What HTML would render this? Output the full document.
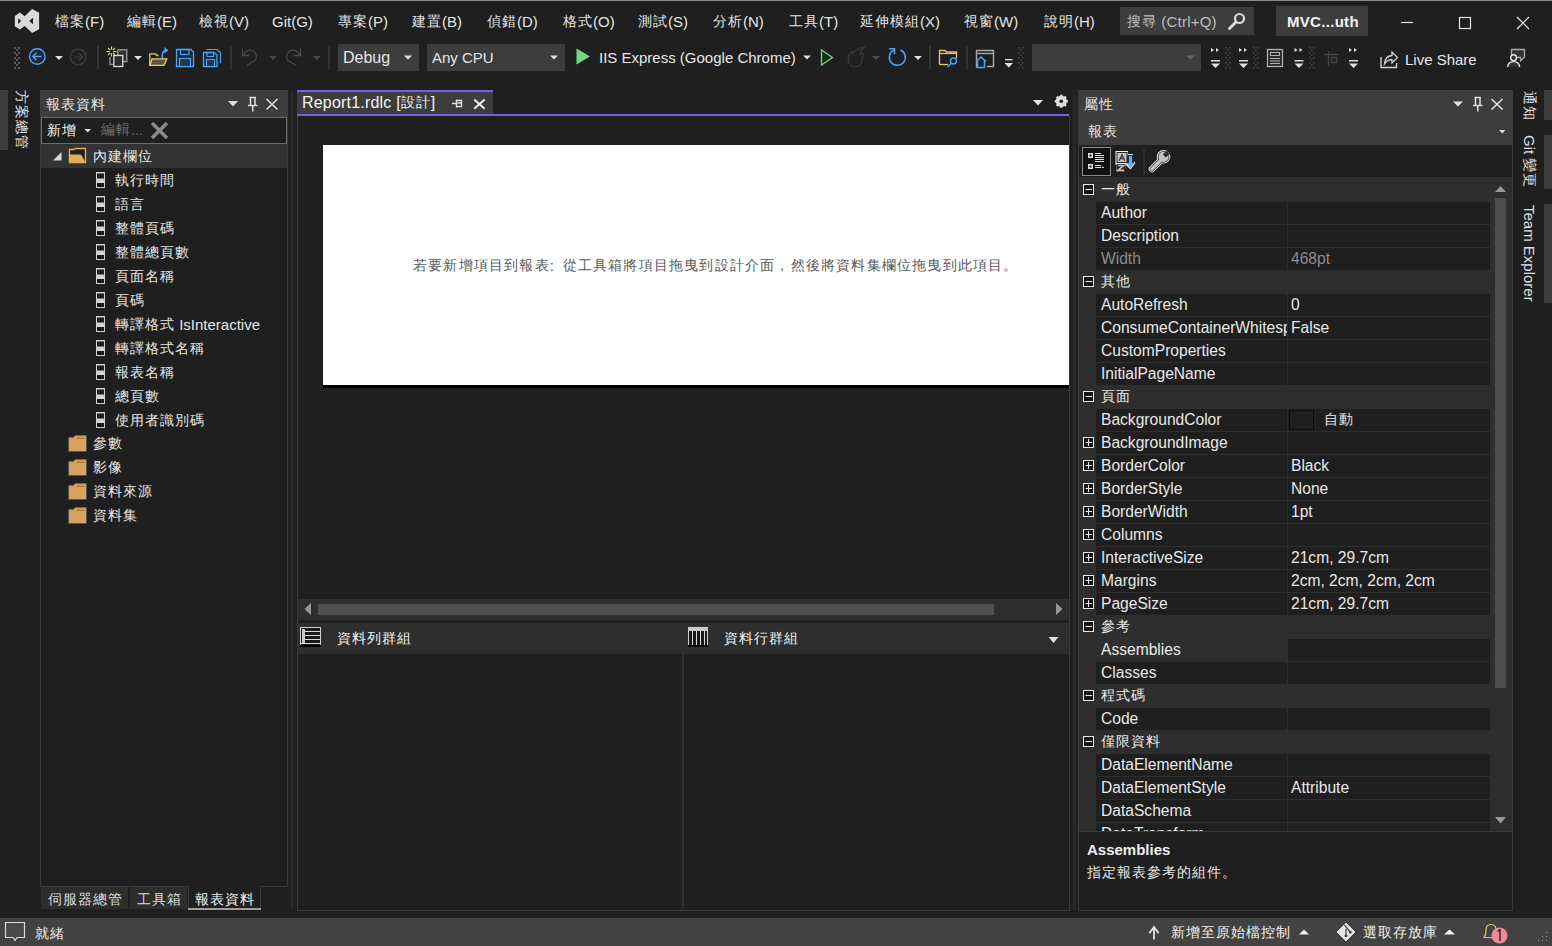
<!DOCTYPE html>
<html><head><meta charset="utf-8">
<style>
*{box-sizing:border-box;margin:0;padding:0}
html,body{width:1552px;height:946px;overflow:hidden;background:#1f1f1f;font-family:"Liberation Sans",sans-serif;font-size:15px;color:#e6e6e6}
.a{position:absolute}
.t{position:absolute;white-space:nowrap;line-height:1}
#topline{left:0;top:0;width:1552px;height:1px;background:#8a8a8a}
.menu{top:14px;font-size:15px;color:#e4e4e4}
.box{background:#3d3d3d}
.sep{position:absolute;width:1px;background:#4a4a4a}
.hdr{background:#3d3d3d}
.tree{color:#e6e6e6}
.pn{font-size:15.6px;margin-top:0px}
.pc{font-size:15px;color:#e8e8e8}
.c{font-size:14px;letter-spacing:1px;position:relative;top:-1.5px}
.rpt .c{letter-spacing:1.2px}
.vt{position:absolute;white-space:nowrap;font-size:15px;color:#e0e0e0;line-height:1;transform-origin:0 0;transform:rotate(90deg)}
</style></head><body>
<div class="a" id="topline"></div>

<!-- logo -->
<svg class="a" style="left:0;top:0" width="50" height="40" viewBox="0 0 50 40">
<path d="M14.8 16 L19.9 12.5 L24.7 16.3 L32.1 8.9 L39.1 12.7 V29.2 L32.1 33 L24.7 26 L19.9 29.6 L14.8 26.2 Z" fill="#d9d9d9"/>
<path d="M18.2 18.2 L21.1 21 L18.2 23.9 Z" fill="#1f1f1f"/>
<path d="M33 17.8 L29.2 21 L33 24.3 Z" fill="#1f1f1f"/>
</svg>

<div class="t menu" style="left:55px"><span class="c">檔案</span>(F)</div>
<div class="t menu" style="left:127px"><span class="c">編輯</span>(E)</div>
<div class="t menu" style="left:199px"><span class="c">檢視</span>(V)</div>
<div class="t menu" style="left:272px">Git(G)</div>
<div class="t menu" style="left:338px"><span class="c">專案</span>(P)</div>
<div class="t menu" style="left:412px"><span class="c">建置</span>(B)</div>
<div class="t menu" style="left:487px"><span class="c">偵錯</span>(D)</div>
<div class="t menu" style="left:563px"><span class="c">格式</span>(O)</div>
<div class="t menu" style="left:638px"><span class="c">測試</span>(S)</div>
<div class="t menu" style="left:713px"><span class="c">分析</span>(N)</div>
<div class="t menu" style="left:789px"><span class="c">工具</span>(T)</div>
<div class="t menu" style="left:860px"><span class="c">延伸模組</span>(X)</div>
<div class="t menu" style="left:964px"><span class="c">視窗</span>(W)</div>
<div class="t menu" style="left:1044px"><span class="c">說明</span>(H)</div>

<div class="a box" style="left:1120px;top:7px;width:134px;height:28px"></div>
<div class="t" style="left:1127px;top:14px;color:#bdbdbd;letter-spacing:0.2px"><span class="c">搜尋</span> (Ctrl+Q)</div>
<div class="a box" style="left:1276px;top:6px;width:92px;height:30px"></div>
<div class="t" style="left:1287px;top:14px;color:#f4f4f4;font-weight:bold;letter-spacing:0.3px">MVC...uth</div>

<!-- toolbar -->
<div class="a box" style="left:338px;top:44px;width:81px;height:27px"></div>
<div class="a box" style="left:427px;top:44px;width:138px;height:27px"></div>
<svg class="a" style="left:0;top:40px" width="1552" height="36" viewBox="0 40 1552 36">
<g fill="#5a5a5a">
<rect x="14" y="47" width="2" height="2"/><rect x="18" y="47" width="2" height="2"/><rect x="16" y="49" width="2" height="2"/>
<rect x="14" y="52" width="2" height="2"/><rect x="18" y="52" width="2" height="2"/><rect x="16" y="54" width="2" height="2"/>
<rect x="14" y="57" width="2" height="2"/><rect x="18" y="57" width="2" height="2"/><rect x="16" y="59" width="2" height="2"/>
<rect x="14" y="62" width="2" height="2"/><rect x="18" y="62" width="2" height="2"/><rect x="16" y="64" width="2" height="2"/>
<rect x="14" y="67" width="2" height="2"/><rect x="18" y="67" width="2" height="2"/>
</g>
<!-- back -->
<circle cx="37.3" cy="56.5" r="7.8" fill="#1d2733" stroke="#4aa3f5" stroke-width="1.4"/>
<path d="M41.5 56.5 H33 M36.5 52.8 L32.8 56.5 L36.5 60.2" fill="none" stroke="#4aa3f5" stroke-width="1.4"/>
<path d="M55 56 H63 L59 60 Z" fill="#e0e0e0"/>
<!-- forward disabled -->
<circle cx="78.2" cy="57" r="7.8" fill="none" stroke="#424242" stroke-width="1.2"/>
<path d="M74 57 H82.5 M79 53.3 L82.7 57 L79 60.7" fill="none" stroke="#424242" stroke-width="1.2"/>
<rect x="97.5" y="45" width="1" height="24" fill="#4a4a4a"/>
<!-- new project -->
<path d="M110 57 V64.3 H113" fill="none" stroke="#9a9a9a" stroke-width="1.3"/>
<rect x="117.8" y="49.8" width="9" height="11.8" fill="#333" stroke="#9a9a9a" stroke-width="1.3"/>
<rect x="113.8" y="55.5" width="9" height="11" fill="#2d2d2d" stroke="#dcdcdc" stroke-width="1.3"/>
<g stroke="#f0d58a" stroke-width="1.1"><path d="M111.5 46.5 V49.7 M111.5 53.3 V56.5 M106.5 51.5 H109.7 M113.3 51.5 H116.5 M108 48 L110.2 50.2 M112.8 52.8 L115 55 M115 48 L112.8 50.2 M110.2 52.8 L108 55"/></g>
<path d="M134 56 H142 L138 60 Z" fill="#e0e0e0"/>
<!-- open folder -->
<path d="M149.8 65 V53.8 H155.5 L157 55.5 H158.5" fill="none" stroke="#e8c77a" stroke-width="1.3"/>
<path d="M150 65.3 L152 58.8 H166.8 L164 65.3 Z" fill="#5f5440" stroke="#e8c77a" stroke-width="1.3"/>
<path d="M162.3 58 V55.5 Q162.3 51 166 50.5" fill="none" stroke="#4aa3f5" stroke-width="1.6"/>
<path d="M164.5 47.5 L167.8 50.3 L164.5 53" fill="#4aa3f5" stroke="#4aa3f5" stroke-width="1"/>
<!-- save -->
<path d="M176.5 49.5 H191 L193.5 52 V66.5 H176.5 Z" fill="#1d2733" stroke="#4aa3f5" stroke-width="1.3"/>
<rect x="180.5" y="49.5" width="8.5" height="5" fill="none" stroke="#4aa3f5" stroke-width="1.2"/>
<rect x="179.5" y="58.5" width="11" height="8" fill="#263545" stroke="#4aa3f5" stroke-width="1.2"/>
<!-- save all -->
<path d="M206.5 49.5 H217 L220.5 52.5 V63" fill="none" stroke="#4aa3f5" stroke-width="1.2"/>
<path d="M203.5 52.5 H214 L217 55 V66.5 H203.5 Z" fill="#1d2733" stroke="#4aa3f5" stroke-width="1.3"/>
<rect x="207" y="52.5" width="6.5" height="4" fill="none" stroke="#4aa3f5" stroke-width="1.1"/>
<rect x="206.5" y="59.5" width="8" height="7" fill="#263545" stroke="#4aa3f5" stroke-width="1.1"/>
<rect x="230.5" y="45" width="1" height="24" fill="#4a4a4a"/>
<!-- undo -->
<path d="M242.5 48.5 V55.5 H249.5 M243 55 Q248 47.5 254 51.5 Q258 56 255.5 60 L247 65.5" fill="none" stroke="#4a4a4a" stroke-width="1.3"/>
<path d="M269 56 H277 L273 60 Z" fill="#4a4a4a"/>
<!-- redo -->
<path d="M300.5 48.5 V55.5 H293.5 M300 55 Q295 47.5 289 51.5 Q285 56 287.5 60 L296 65.5" fill="none" stroke="#4a4a4a" stroke-width="1.3"/>
<path d="M313 56 H321 L317 60 Z" fill="#4a4a4a"/>
<rect x="328.5" y="45" width="1" height="24" fill="#4a4a4a"/>
<!-- combo arrows -->
<path d="M404 55.5 H412 L408 59.5 Z" fill="#e0e0e0"/>
<path d="M550 55.5 H558 L554 59.5 Z" fill="#e0e0e0"/>
<path d="M576.5 48.5 L590 56.5 L576.5 64.5 Z" fill="#74d779"/>
<path d="M803 55.5 H811 L807 59.5 Z" fill="#e0e0e0"/>
<path d="M821.5 50 L832.5 57.5 L821.5 65 Z" fill="#1f2a20" stroke="#74d779" stroke-width="1.3"/>
<!-- flame -->
<path d="M851.5 51.5 L853 53.5 Q856 48.5 864 47.2 Q860 50.5 860.5 54.5 L863.8 53 Q862 57 862 61 Q861 66.5 855.5 66.8 Q848.5 66.5 848.2 59.5 Q848.2 54.5 851.5 51.5 Z" fill="none" stroke="#3a3a3a" stroke-width="1.3"/>
<path d="M872 56 H880 L876 60 Z" fill="#4a4a4a"/>
<!-- refresh -->
<path d="M900.5 50 A8 8 0 1 1 893.8 50.2" fill="none" stroke="#4aa3f5" stroke-width="1.5"/>
<path d="M889.2 48.8 H894.5 V54" fill="none" stroke="#4aa3f5" stroke-width="1.6"/>
<path d="M914 56 H922 L918 60 Z" fill="#e0e0e0"/>
<rect x="929.5" y="45" width="1" height="24" fill="#4a4a4a"/>
<!-- folder search -->
<path d="M939.5 64.5 V50.5 H945 L946.5 52 H956.5 V58" fill="none" stroke="#e8c77a" stroke-width="1.3"/>
<path d="M939.5 64.5 H948" fill="none" stroke="#e8c77a" stroke-width="1.3"/>
<path d="M939.5 53.5 H956.5" fill="none" stroke="#e8c77a" stroke-width="1.2"/>
<circle cx="953.5" cy="61" r="3" fill="#1f1f1f" stroke="#4aa3f5" stroke-width="1.4"/>
<path d="M951.3 63.2 L947.5 67" stroke="#4aa3f5" stroke-width="1.5"/>
<rect x="966.5" y="45" width="1" height="24" fill="#4a4a4a"/>
<!-- window home -->
<path d="M978 67 H976.5 V50.5 H993.5 V66.5 H987" fill="none" stroke="#a8a8a8" stroke-width="1.4"/>
<path d="M976.5 53.5 H993.5" stroke="#a8a8a8" stroke-width="1.4"/>
<path d="M976 61.5 L981 57 L986 61.5 M977.5 60.5 V67.5 H984.5 V60.5" fill="none" stroke="#4aa3f5" stroke-width="1.6"/>
<rect x="1005" y="59" width="7.5" height="1.3" fill="#e0e0e0"/>
<path d="M1004.5 63 H1013 L1008.75 67.5 Z" fill="#e0e0e0"/>
<g fill="#4a4a4a">
<rect x="1018" y="47" width="1.5" height="1.5"/><rect x="1022" y="47" width="1.5" height="1.5"/><rect x="1020" y="49.5" width="1.5" height="1.5"/>
<rect x="1018" y="52" width="1.5" height="1.5"/><rect x="1022" y="52" width="1.5" height="1.5"/><rect x="1020" y="54.5" width="1.5" height="1.5"/>
<rect x="1018" y="57" width="1.5" height="1.5"/><rect x="1022" y="57" width="1.5" height="1.5"/><rect x="1020" y="59.5" width="1.5" height="1.5"/>
<rect x="1018" y="62" width="1.5" height="1.5"/><rect x="1022" y="62" width="1.5" height="1.5"/><rect x="1020" y="64.5" width="1.5" height="1.5"/>
<rect x="1018" y="67" width="1.5" height="1.5"/><rect x="1022" y="67" width="1.5" height="1.5"/>
</g>
<rect x="1032" y="44" width="169" height="27" fill="#3d3d3d"/>
<path d="M1186 55.5 H1195 L1190.5 59.5 Z" fill="#686868"/>
</svg>
<div class="t" style="left:343px;top:50px;font-size:16px">Debug</div>
<div class="t" style="left:432px;top:50px">Any CPU</div>
<div class="t" style="left:599px;top:50px">IIS Express (Google Chrome)</div>
<div class="t" style="left:1405px;top:52px">Live Share</div>
<!-- right toolbar icons -->
<svg class="a" style="left:1200px;top:40px" width="352" height="36" viewBox="1200 40 352 36">
<defs>
<g id="ovf">
<path d="M0 0 L3 2 L0 4 Z M5 0 L8 2 L5 4 Z" fill="#e0e0e0"/>
<rect x="0" y="12" width="9" height="1.5" fill="#e0e0e0"/>
<path d="M0 15.5 H9 L4.5 20 Z" fill="#e0e0e0"/>
</g>
<g id="grip" fill="#4a4a4a">
<rect x="0" y="0" width="1.5" height="1.5"/><rect x="4" y="0" width="1.5" height="1.5"/><rect x="2" y="2.5" width="1.5" height="1.5"/>
<rect x="0" y="5" width="1.5" height="1.5"/><rect x="4" y="5" width="1.5" height="1.5"/><rect x="2" y="7.5" width="1.5" height="1.5"/>
<rect x="0" y="10" width="1.5" height="1.5"/><rect x="4" y="10" width="1.5" height="1.5"/><rect x="2" y="12.5" width="1.5" height="1.5"/>
<rect x="0" y="15" width="1.5" height="1.5"/><rect x="4" y="15" width="1.5" height="1.5"/><rect x="2" y="17.5" width="1.5" height="1.5"/>
<rect x="0" y="20" width="1.5" height="1.5"/><rect x="4" y="20" width="1.5" height="1.5"/>
</g>
</defs>
<use href="#ovf" x="1211" y="48"/><use href="#grip" x="1225" y="47"/>
<use href="#ovf" x="1239" y="48"/><use href="#grip" x="1253" y="47"/>
<rect x="1267.5" y="49.5" width="15" height="17" fill="#2a2a2a" stroke="#b0b0b0" stroke-width="1.3"/>
<rect x="1270.5" y="52.5" width="9" height="3" fill="none" stroke="#b0b0b0" stroke-width="1"/>
<path d="M1270 58.5 H1280 M1270 61 H1280 M1270 63.5 H1280" stroke="#b0b0b0" stroke-width="1"/>
<use href="#ovf" x="1294.5" y="48"/><use href="#grip" x="1309" y="47"/>
<path d="M1324 54.5 H1339 M1328.5 51 V66 M1331.5 57.5 H1336.5 V62.5 H1331.5 Z" fill="none" stroke="#444" stroke-width="1.3"/>
<use href="#ovf" x="1349" y="48"/>
<path d="M1381 57 V67.5 H1396.5 V63" fill="none" stroke="#d0d0d0" stroke-width="1.4"/>
<path d="M1384.5 64 Q1385 56 1392 55.5 V52 L1397.5 57.5 L1392 63 V59.5 Q1387.5 59.5 1384.5 64 Z" fill="none" stroke="#d0d0d0" stroke-width="1.3"/>
<path d="M1511.5 56 V49.5 H1524.5 V57 L1520.5 61 V57.5 H1516.5" fill="#333" stroke="#a8a8a8" stroke-width="1.3"/>
<circle cx="1513.6" cy="57.7" r="2.9" fill="#333" stroke="#e6e6e6" stroke-width="1.4"/>
<path d="M1507.6 67 Q1508 61.6 1513.6 61.6 Q1519.2 61.6 1519.7 67" fill="#333" stroke="#e6e6e6" stroke-width="1.4"/>
</svg>
<!-- search icon -->
<svg class="a" style="left:1226px;top:10px" width="20" height="22" viewBox="1226 10 20 22">
<circle cx="1239.5" cy="18.5" r="4.5" fill="none" stroke="#d8d8d8" stroke-width="2.2"/>
<path d="M1236 22 L1229.5 28.5" stroke="#d8d8d8" stroke-width="3" stroke-linecap="round"/>
</svg>
<!-- left vertical tab strip -->
<div class="a" style="left:0;top:90px;width:8px;height:60px;background:#3d3d3d"></div>
<div class="vt" style="left:29px;top:90px"><span class="c">方案總管</span></div>

<!-- left panel -->
<div class="a hdr" style="left:40px;top:90px;width:248px;height:54px"></div>
<div class="t" style="left:46px;top:97px;color:#e6e6e6"><span class="c">報表資料</span></div>
<div class="a" style="left:41px;top:117px;width:246px;height:27px;background:#1f1f1f;border:1px solid #6a6a6a"></div>
<div class="t" style="left:47px;top:123px;color:#f0f0f0"><span class="c">新增</span></div>
<div class="t" style="left:101px;top:123px;color:#707070;font-size:14px"><span class="c">編輯</span>...</div>
<div class="a" style="left:40px;top:144px;width:248px;height:743px;background:#1f1f1f;border:1px solid #3a3a3a;border-top:0"></div>
<div class="a" style="left:41px;top:144px;width:246px;height:24px;background:#333333"></div>
<div class="t tree" style="left:93px;top:149px"><span class="c">內建欄位</span></div>
<div class="t tree" style="left:115px;top:173px"><span class="c">執行時間</span></div>
<div class="t tree" style="left:115px;top:197px"><span class="c">語言</span></div>
<div class="t tree" style="left:115px;top:221px"><span class="c">整體頁碼</span></div>
<div class="t tree" style="left:115px;top:245px"><span class="c">整體總頁數</span></div>
<div class="t tree" style="left:115px;top:269px"><span class="c">頁面名稱</span></div>
<div class="t tree" style="left:115px;top:293px"><span class="c">頁碼</span></div>
<div class="t tree" style="left:115px;top:317px"><span class="c">轉譯格式</span> IsInteractive</div>
<div class="t tree" style="left:115px;top:341px"><span class="c">轉譯格式名稱</span></div>
<div class="t tree" style="left:115px;top:365px"><span class="c">報表名稱</span></div>
<div class="t tree" style="left:115px;top:389px"><span class="c">總頁數</span></div>
<div class="t tree" style="left:115px;top:413px"><span class="c">使用者識別碼</span></div>
<div class="t tree" style="left:93px;top:436px"><span class="c">參數</span></div>
<div class="t tree" style="left:93px;top:460px"><span class="c">影像</span></div>
<div class="t tree" style="left:93px;top:484px"><span class="c">資料來源</span></div>
<div class="t tree" style="left:93px;top:508px"><span class="c">資料集</span></div>

<svg class="a" style="left:0;top:90px" width="300" height="460" viewBox="0 90 300 460">
<path d="M228 101 H238 L233 106.5 Z" fill="#e0e0e0"/>
<path d="M249.5 97.5 H256 M250.5 98 V105 M255 98 V105 M248 105.5 H257.5 M252.75 105.5 V111.5" fill="none" stroke="#e0e0e0" stroke-width="1.5"/>
<path d="M266.5 99 L277.5 109.5 M277.5 99 L266.5 109.5" stroke="#e0e0e0" stroke-width="1.6"/>
<path d="M84.5 129 H91 L87.75 132.5 Z" fill="#e0e0e0"/>
<path d="M152 123 L167 138 M167 123 L152 138" stroke="#8a8a8a" stroke-width="3.5"/>
<path d="M53 160.5 L61.5 152 V160.5 Z" fill="#d8d8d8"/>
<path d="M69.5 162.5 V149.5 H74 L75.5 148.5 H85.5 V162.5 Z" fill="#1f1f1f" stroke="#e0ae5e" stroke-width="1.4"/>
<path d="M69 154.5 H81 L85.5 162.5 H69 Z" fill="#e0ae5e"/>
<rect x="96" y="172.0" width="9" height="16" fill="#d0d0d0"/><rect x="97" y="173.5" width="7" height="5" fill="#1a1a1a"/><rect x="97" y="183.0" width="7" height="4" fill="#1a1a1a"/>
<rect x="96" y="196.0" width="9" height="16" fill="#d0d0d0"/><rect x="97" y="197.5" width="7" height="5" fill="#1a1a1a"/><rect x="97" y="207.0" width="7" height="4" fill="#1a1a1a"/>
<rect x="96" y="220.0" width="9" height="16" fill="#d0d0d0"/><rect x="97" y="221.5" width="7" height="5" fill="#1a1a1a"/><rect x="97" y="231.0" width="7" height="4" fill="#1a1a1a"/>
<rect x="96" y="244.0" width="9" height="16" fill="#d0d0d0"/><rect x="97" y="245.5" width="7" height="5" fill="#1a1a1a"/><rect x="97" y="255.0" width="7" height="4" fill="#1a1a1a"/>
<rect x="96" y="268.0" width="9" height="16" fill="#d0d0d0"/><rect x="97" y="269.5" width="7" height="5" fill="#1a1a1a"/><rect x="97" y="279.0" width="7" height="4" fill="#1a1a1a"/>
<rect x="96" y="292.0" width="9" height="16" fill="#d0d0d0"/><rect x="97" y="293.5" width="7" height="5" fill="#1a1a1a"/><rect x="97" y="303.0" width="7" height="4" fill="#1a1a1a"/>
<rect x="96" y="316.0" width="9" height="16" fill="#d0d0d0"/><rect x="97" y="317.5" width="7" height="5" fill="#1a1a1a"/><rect x="97" y="327.0" width="7" height="4" fill="#1a1a1a"/>
<rect x="96" y="340.0" width="9" height="16" fill="#d0d0d0"/><rect x="97" y="341.5" width="7" height="5" fill="#1a1a1a"/><rect x="97" y="351.0" width="7" height="4" fill="#1a1a1a"/>
<rect x="96" y="364.0" width="9" height="16" fill="#d0d0d0"/><rect x="97" y="365.5" width="7" height="5" fill="#1a1a1a"/><rect x="97" y="375.0" width="7" height="4" fill="#1a1a1a"/>
<rect x="96" y="388.0" width="9" height="16" fill="#d0d0d0"/><rect x="97" y="389.5" width="7" height="5" fill="#1a1a1a"/><rect x="97" y="399.0" width="7" height="4" fill="#1a1a1a"/>
<rect x="96" y="412.0" width="9" height="16" fill="#d0d0d0"/><rect x="97" y="413.5" width="7" height="5" fill="#1a1a1a"/><rect x="97" y="423.0" width="7" height="4" fill="#1a1a1a"/>
<path d="M68.5 451.5 V437.5 H73.5 L75 435.5 H86.5 V451.5 Z" fill="#d6a45c" stroke="#505050" stroke-width="1"/><path d="M69 438.0 H73.8 L75.3 436.0 H86" fill="none" stroke="#c08a45" stroke-width="1"/><path d="M77 438.3 H84.5" stroke="#a8743a" stroke-width="1.2"/>
<path d="M68.5 475.5 V461.5 H73.5 L75 459.5 H86.5 V475.5 Z" fill="#d6a45c" stroke="#505050" stroke-width="1"/><path d="M69 462.0 H73.8 L75.3 460.0 H86" fill="none" stroke="#c08a45" stroke-width="1"/><path d="M77 462.3 H84.5" stroke="#a8743a" stroke-width="1.2"/>
<path d="M68.5 499.5 V485.5 H73.5 L75 483.5 H86.5 V499.5 Z" fill="#d6a45c" stroke="#505050" stroke-width="1"/><path d="M69 486.0 H73.8 L75.3 484.0 H86" fill="none" stroke="#c08a45" stroke-width="1"/><path d="M77 486.3 H84.5" stroke="#a8743a" stroke-width="1.2"/>
<path d="M68.5 523.5 V509.5 H73.5 L75 507.5 H86.5 V523.5 Z" fill="#d6a45c" stroke="#505050" stroke-width="1"/><path d="M69 510.0 H73.8 L75.3 508.0 H86" fill="none" stroke="#c08a45" stroke-width="1"/><path d="M77 510.3 H84.5" stroke="#a8743a" stroke-width="1.2"/>

</svg>

<!-- bottom tabs -->
<div class="a" style="left:41px;top:887px;width:87px;height:22px;background:#2d2d2d"></div>
<div class="a" style="left:130px;top:887px;width:57px;height:22px;background:#2d2d2d"></div>
<div class="a" style="left:188px;top:886px;width:73px;height:24px;background:#1f1f1f;border:1px solid #3a3a3a;border-top:0"></div>
<div class="a" style="left:188px;top:908px;width:73px;height:2px;background:#a0a0a0"></div>
<div class="t" style="left:48px;top:892px;color:#dcdcdc"><span class="c">伺服器總管</span></div>
<div class="t" style="left:137px;top:892px;color:#dcdcdc"><span class="c">工具箱</span></div>
<div class="t" style="left:195px;top:892px;color:#f0f0f0"><span class="c">報表資料</span></div>
<!-- document -->
<div class="a" style="left:291px;top:90px;width:2px;height:820px;background:#2a2a2a"></div>
<div class="a" style="left:1073px;top:90px;width:3px;height:820px;background:#272727"></div>
<div class="a" style="left:297px;top:90px;width:196px;height:24px;background:#3d3d3d;border-top:2px solid #7160e8"></div>
<div class="a" style="left:297px;top:114px;width:772px;height:2px;background:#7160e8"></div>
<div class="a" style="left:297px;top:116px;width:773px;height:795px;background:#1f1f1f;border:1px solid #3a3a3a;border-top:0"></div>
<div class="t" style="left:302px;top:95px;color:#f4f4f4;font-size:16px;letter-spacing:0.2px">Report1.rdlc [<span class="c">設計</span>]</div>
<svg class="a" style="left:440px;top:90px" width="640" height="30" viewBox="440 90 640 30">
<path d="M452 103.5 H456 M456.5 99.5 V107.5 M456.5 100.5 H461.5 V106.5 H456.5 M457.5 103 H461" fill="none" stroke="#e0e0e0" stroke-width="1.4"/>
<path d="M474.2 99.5 L484.6 108.7 M484.6 99.5 L474.2 108.7" stroke="#f4f4f4" stroke-width="1.9"/>
<path d="M1033 100 H1043 L1038 105.5 Z" fill="#e0e0e0"/>
<g transform="translate(1061.3 101.3)">
<circle r="4.3" fill="none" stroke="#e0e0e0" stroke-width="2.6"/>
<g stroke="#e0e0e0" stroke-width="2.4"><path d="M0 -6.5 V6.5 M-6.5 0 H6.5 M-4.6 -4.6 L4.6 4.6 M4.6 -4.6 L-4.6 4.6"/></g>
<circle r="1.8" fill="#1f1f1f"/>
</g>
</svg>
<div class="a" style="left:323px;top:145px;width:746px;height:243px;background:#fff;border-bottom:3px solid #000"></div>
<div class="t rpt" style="left:413px;top:258px;color:#5a5a5a;font-size:15px;letter-spacing:0.18px;word-spacing:4px"><span class="c">若要新增項目到報表</span>: <span class="c">從工具箱將項目拖曳到設計介面，然後將資料集欄位拖曳到此項目。</span></div>

<!-- h scrollbar -->
<div class="a" style="left:298px;top:599px;width:771px;height:21px;background:#2e2e2e"></div>
<div class="a" style="left:318px;top:604px;width:676px;height:11px;background:#505050"></div>
<svg class="a" style="left:298px;top:599px" width="772" height="60" viewBox="298 599 772 60">
<path d="M311 603 V615 L304.5 609 Z" fill="#999"/>
<path d="M1056 603 V615 L1062.5 609 Z" fill="#999"/>
</svg>
<!-- group panes -->
<div class="a" style="left:298px;top:623px;width:771px;height:31px;background:#2e2e2e"></div>
<div class="a" style="left:682px;top:654px;width:2px;height:256px;background:#2e2e2e"></div>
<svg class="a" style="left:298px;top:622px" width="772" height="40" viewBox="298 622 772 40">
<rect x="300.5" y="627.5" width="20" height="18" fill="#1a1a1a" stroke="#d0d0d0" stroke-width="1"/>
<g fill="#c8c8c8"><rect x="302" y="629" width="3" height="15"/></g>
<g stroke="#d8d8d8" stroke-width="1"><path d="M305 631.5 H320 M305 635.5 H320 M305 639.5 H320 M301 643.5 H320"/></g>
<rect x="300" y="645" width="21" height="2" fill="#000"/>
<rect x="688.5" y="627.5" width="19" height="18" fill="#1a1a1a" stroke="#d0d0d0" stroke-width="1"/>
<g fill="#c8c8c8"><rect x="689" y="628" width="18" height="3"/></g>
<g stroke="#d8d8d8" stroke-width="1"><path d="M692.5 631 V645 M696.5 631 V645 M700.5 631 V645 M704.5 631 V645"/></g>
<rect x="688" y="645" width="20" height="2" fill="#000"/>
<path d="M1048.5 637 H1058.5 L1053.5 643 Z" fill="#e0e0e0"/>
</svg>
<div class="t" style="left:337px;top:631px;color:#f0f0f0"><span class="c">資料列群組</span></div>
<div class="t" style="left:724px;top:631px;color:#f0f0f0"><span class="c">資料行群組</span></div>

<!-- properties -->
<div class="a" style="left:1078px;top:90px;width:435px;height:821px;border:1px solid #3a3a3a;background:#1f1f1f"></div>
<div class="a hdr" style="left:1079px;top:90px;width:433px;height:55px"></div>
<div class="t" style="left:1084px;top:97px;color:#e6e6e6"><span class="c">屬性</span></div>
<div class="t" style="left:1088px;top:124px;color:#e6e6e6"><span class="c">報表</span></div>
<div class="a" style="left:1079px;top:145px;width:433px;height:32px;background:#1f1f1f"></div>
<div class="a" style="left:1079px;top:177px;width:433px;height:654px;background:#2e2e2e"></div>
<div class="a" style="left:1079px;top:177px;width:433px;height:654px;overflow:hidden">
<div class="a" style="left:0;top:0;width:433px;height:654px">
</div></div>
<div class="a" style="left:0;top:0;width:1552px;height:831px;overflow:hidden;pointer-events:none">
<div class="a" style="left:1096px;top:202px;width:191px;height:22px;background:#1f1f1f"></div><div class="a" style="left:1288px;top:202px;width:202px;height:22px;background:#1f1f1f"></div>
<div class="a" style="left:1096px;top:225px;width:191px;height:22px;background:#1f1f1f"></div><div class="a" style="left:1288px;top:225px;width:202px;height:22px;background:#1f1f1f"></div>
<div class="a" style="left:1096px;top:248px;width:191px;height:22px;background:#1f1f1f"></div><div class="a" style="left:1288px;top:248px;width:202px;height:22px;background:#1f1f1f"></div>
<div class="a" style="left:1096px;top:294px;width:191px;height:22px;background:#1f1f1f"></div><div class="a" style="left:1288px;top:294px;width:202px;height:22px;background:#1f1f1f"></div>
<div class="a" style="left:1096px;top:317px;width:191px;height:22px;background:#1f1f1f"></div><div class="a" style="left:1288px;top:317px;width:202px;height:22px;background:#1f1f1f"></div>
<div class="a" style="left:1096px;top:340px;width:191px;height:22px;background:#1f1f1f"></div><div class="a" style="left:1288px;top:340px;width:202px;height:22px;background:#1f1f1f"></div>
<div class="a" style="left:1096px;top:363px;width:191px;height:22px;background:#1f1f1f"></div><div class="a" style="left:1288px;top:363px;width:202px;height:22px;background:#1f1f1f"></div>
<div class="a" style="left:1096px;top:409px;width:191px;height:22px;background:#1f1f1f"></div><div class="a" style="left:1288px;top:409px;width:202px;height:22px;background:#1f1f1f"></div>
<div class="a" style="left:1096px;top:432px;width:191px;height:22px;background:#1f1f1f"></div><div class="a" style="left:1288px;top:432px;width:202px;height:22px;background:#1f1f1f"></div>
<div class="a" style="left:1096px;top:455px;width:191px;height:22px;background:#1f1f1f"></div><div class="a" style="left:1288px;top:455px;width:202px;height:22px;background:#1f1f1f"></div>
<div class="a" style="left:1096px;top:478px;width:191px;height:22px;background:#1f1f1f"></div><div class="a" style="left:1288px;top:478px;width:202px;height:22px;background:#1f1f1f"></div>
<div class="a" style="left:1096px;top:501px;width:191px;height:22px;background:#1f1f1f"></div><div class="a" style="left:1288px;top:501px;width:202px;height:22px;background:#1f1f1f"></div>
<div class="a" style="left:1096px;top:524px;width:191px;height:22px;background:#1f1f1f"></div><div class="a" style="left:1288px;top:524px;width:202px;height:22px;background:#1f1f1f"></div>
<div class="a" style="left:1096px;top:547px;width:191px;height:22px;background:#1f1f1f"></div><div class="a" style="left:1288px;top:547px;width:202px;height:22px;background:#1f1f1f"></div>
<div class="a" style="left:1096px;top:570px;width:191px;height:22px;background:#1f1f1f"></div><div class="a" style="left:1288px;top:570px;width:202px;height:22px;background:#1f1f1f"></div>
<div class="a" style="left:1096px;top:593px;width:191px;height:22px;background:#1f1f1f"></div><div class="a" style="left:1288px;top:593px;width:202px;height:22px;background:#1f1f1f"></div>
<div class="a" style="left:1096px;top:639px;width:191px;height:22px;background:#2e2e2e"></div><div class="a" style="left:1288px;top:639px;width:202px;height:22px;background:#1f1f1f"></div>
<div class="a" style="left:1096px;top:662px;width:191px;height:22px;background:#1f1f1f"></div><div class="a" style="left:1288px;top:662px;width:202px;height:22px;background:#1f1f1f"></div>
<div class="a" style="left:1096px;top:708px;width:191px;height:22px;background:#1f1f1f"></div><div class="a" style="left:1288px;top:708px;width:202px;height:22px;background:#1f1f1f"></div>
<div class="a" style="left:1096px;top:754px;width:191px;height:22px;background:#1f1f1f"></div><div class="a" style="left:1288px;top:754px;width:202px;height:22px;background:#1f1f1f"></div>
<div class="a" style="left:1096px;top:777px;width:191px;height:22px;background:#1f1f1f"></div><div class="a" style="left:1288px;top:777px;width:202px;height:22px;background:#1f1f1f"></div>
<div class="a" style="left:1096px;top:800px;width:191px;height:22px;background:#1f1f1f"></div><div class="a" style="left:1288px;top:800px;width:202px;height:22px;background:#1f1f1f"></div>
<div class="a" style="left:1096px;top:823px;width:191px;height:22px;background:#1f1f1f"></div><div class="a" style="left:1288px;top:823px;width:202px;height:22px;background:#1f1f1f"></div>

<div class="t pc" style="left:1101px;top:182px"><span class="c">一般</span></div>
<div class="t pn" style="left:1101px;top:205px;color:#e8e8e8">Author</div>
<div class="t pn" style="left:1101px;top:228px;color:#e8e8e8">Description</div>
<div class="t pn" style="left:1101px;top:251px;color:#8c8c8c">Width</div>
<div class="t pn" style="left:1291px;top:251px;color:#8c8c8c">468pt</div>
<div class="t pc" style="left:1101px;top:274px"><span class="c">其他</span></div>
<div class="t pn" style="left:1101px;top:297px;color:#e8e8e8">AutoRefresh</div>
<div class="t pn" style="left:1291px;top:297px;color:#e8e8e8">0</div>
<div class="t pn" style="left:1101px;top:320px;color:#e8e8e8;width:186px;overflow:hidden">ConsumeContainerWhitespace</div>
<div class="t pn" style="left:1291px;top:320px;color:#e8e8e8">False</div>
<div class="t pn" style="left:1101px;top:343px;color:#e8e8e8">CustomProperties</div>
<div class="t pn" style="left:1101px;top:366px;color:#e8e8e8">InitialPageName</div>
<div class="t pc" style="left:1101px;top:389px"><span class="c">頁面</span></div>
<div class="t pn" style="left:1101px;top:412px;color:#e8e8e8">BackgroundColor</div>
<div class="t pn" style="left:1324px;top:412px;color:#e8e8e8"><span class="c">自動</span></div>
<div class="t pn" style="left:1101px;top:435px;color:#e8e8e8">BackgroundImage</div>
<div class="t pn" style="left:1101px;top:458px;color:#e8e8e8">BorderColor</div>
<div class="t pn" style="left:1291px;top:458px;color:#e8e8e8">Black</div>
<div class="t pn" style="left:1101px;top:481px;color:#e8e8e8">BorderStyle</div>
<div class="t pn" style="left:1291px;top:481px;color:#e8e8e8">None</div>
<div class="t pn" style="left:1101px;top:504px;color:#e8e8e8">BorderWidth</div>
<div class="t pn" style="left:1291px;top:504px;color:#e8e8e8">1pt</div>
<div class="t pn" style="left:1101px;top:527px;color:#e8e8e8">Columns</div>
<div class="t pn" style="left:1101px;top:550px;color:#e8e8e8">InteractiveSize</div>
<div class="t pn" style="left:1291px;top:550px;color:#e8e8e8">21cm, 29.7cm</div>
<div class="t pn" style="left:1101px;top:573px;color:#e8e8e8">Margins</div>
<div class="t pn" style="left:1291px;top:573px;color:#e8e8e8">2cm, 2cm, 2cm, 2cm</div>
<div class="t pn" style="left:1101px;top:596px;color:#e8e8e8">PageSize</div>
<div class="t pn" style="left:1291px;top:596px;color:#e8e8e8">21cm, 29.7cm</div>
<div class="t pc" style="left:1101px;top:619px"><span class="c">參考</span></div>
<div class="t pn" style="left:1101px;top:642px;color:#e8e8e8">Assemblies</div>
<div class="t pn" style="left:1101px;top:665px;color:#e8e8e8">Classes</div>
<div class="t pc" style="left:1101px;top:688px"><span class="c">程式碼</span></div>
<div class="t pn" style="left:1101px;top:711px;color:#e8e8e8">Code</div>
<div class="t pc" style="left:1101px;top:734px"><span class="c">僅限資料</span></div>
<div class="t pn" style="left:1101px;top:757px;color:#e8e8e8">DataElementName</div>
<div class="t pn" style="left:1101px;top:780px;color:#e8e8e8">DataElementStyle</div>
<div class="t pn" style="left:1291px;top:780px;color:#e8e8e8">Attribute</div>
<div class="t pn" style="left:1101px;top:803px;color:#e8e8e8">DataSchema</div>
<div class="t pn" style="left:1101px;top:826px;color:#e8e8e8">DataTransform</div>

</div>
<svg class="a" style="left:1078px;top:90px" width="474" height="830" viewBox="1078 90 474 830">
<path d="M1453 101.5 H1463 L1458 106.5 Z" fill="#e0e0e0"/>
<path d="M1474.5 97.5 H1481 M1475.5 98 V105 M1480 98 V105 M1473 105.5 H1482.5 M1477.75 105.5 V111.5" fill="none" stroke="#e0e0e0" stroke-width="1.5"/>
<path d="M1491.5 99 L1502.5 109.5 M1502.5 99 L1491.5 109.5" stroke="#e0e0e0" stroke-width="1.6"/>
<path d="M1499 130 H1505.5 L1502.25 133.5 Z" fill="#e0e0e0"/>
<!-- toolbar icons -->
<rect x="1082.5" y="147.5" width="28" height="28" fill="#111" stroke="#8a8a8a" stroke-width="1"/>
<rect x="1088" y="153" width="5" height="5" fill="#e0e0e0"/><rect x="1089.5" y="154.5" width="2" height="2" fill="#111"/>
<rect x="1088" y="164" width="5" height="5" fill="#e0e0e0"/><rect x="1089.5" y="165.5" width="2" height="2" fill="#111"/>
<g stroke="#e0e0e0" stroke-width="1"><path d="M1095 153.5 H1101 M1095 155.5 H1104 M1095 157.5 H1104 M1095 159.5 H1104 M1095 161.5 H1104 M1095 165.5 H1101 M1095 167.5 H1101 M1102 167.5 H1104"/></g>
<!-- AZ -->
<path d="M1115.5 151 H1128 V154 H1132.5 L1134 156.5 V161.5 L1135.5 163 L1130.5 169.5 L1126 165 L1124.5 171.5 H1116.5 V165 H1115.5 Z" fill="#f4f4f4"/>
<rect x="1116.5" y="152" width="11" height="11" fill="#2a2a2a"/>
<rect x="1117.5" y="153" width="9" height="9" fill="#c4c4c4"/>
<path d="M1119.2 160.8 L1122 154.8 L1124.8 160.8 M1120.3 158.5 H1123.7" fill="none" stroke="#3a3a3a" stroke-width="1.3"/>
<rect x="1116.5" y="164" width="9" height="7.5" fill="#2a2a2a"/>
<path d="M1118 165.5 H1123.5 L1118 170.3 H1124" fill="none" stroke="#bdbdbd" stroke-width="1.6"/>
<rect x="1127" y="155" width="7" height="9" fill="#2a2a2a"/>
<rect x="1129" y="156" width="3" height="9" fill="#5ab0f8"/>
<path d="M1126.2 163 H1134.8 L1130.5 168.3 Z" fill="#5ab0f8"/>
<rect x="1143.5" y="149" width="1" height="26" fill="#3d3d3d"/>
<!-- wrench -->
<g stroke-linecap="round">
<path d="M1152 169 L1160 161" stroke="#f4f4f4" stroke-width="6.5"/>
<circle cx="1163.5" cy="156.8" r="6.8" fill="#f4f4f4"/>
<path d="M1152 169 L1160 161" stroke="#2a2a2a" stroke-width="4.8"/>
<circle cx="1163.5" cy="156.8" r="5.9" fill="#2a2a2a"/>
<path d="M1152 169 L1160 161" stroke="#c4c4c4" stroke-width="3.6"/>
<circle cx="1163.5" cy="156.8" r="5.1" fill="#c4c4c4"/>
</g>
<path d="M1162.8 154.6 L1166.6 150.8 L1169.6 153.8 L1165.8 157.6 Z" fill="#2a2a2a"/>
<rect x="1083.5" y="184.5" width="10" height="10" fill="#141414" stroke="#e8e8e8" stroke-width="1"/><path d="M1085.5 189.5 H1092" stroke="#e8e8e8" stroke-width="1.1"/>
<rect x="1083.5" y="276.5" width="10" height="10" fill="#141414" stroke="#e8e8e8" stroke-width="1"/><path d="M1085.5 281.5 H1092" stroke="#e8e8e8" stroke-width="1.1"/>
<rect x="1083.5" y="391.5" width="10" height="10" fill="#141414" stroke="#e8e8e8" stroke-width="1"/><path d="M1085.5 396.5 H1092" stroke="#e8e8e8" stroke-width="1.1"/>
<rect x="1289.5" y="410.5" width="24" height="19" fill="#1f1f1f" stroke="#0a0a0a" stroke-width="1"/>
<rect x="1083.5" y="437.5" width="10" height="10" fill="#141414" stroke="#e8e8e8" stroke-width="1"/><path d="M1085.5 442.5 H1092 M1088.5 439.0 V446.0" stroke="#e8e8e8" stroke-width="1.1"/>
<rect x="1083.5" y="460.5" width="10" height="10" fill="#141414" stroke="#e8e8e8" stroke-width="1"/><path d="M1085.5 465.5 H1092 M1088.5 462.0 V469.0" stroke="#e8e8e8" stroke-width="1.1"/>
<rect x="1083.5" y="483.5" width="10" height="10" fill="#141414" stroke="#e8e8e8" stroke-width="1"/><path d="M1085.5 488.5 H1092 M1088.5 485.0 V492.0" stroke="#e8e8e8" stroke-width="1.1"/>
<rect x="1083.5" y="506.5" width="10" height="10" fill="#141414" stroke="#e8e8e8" stroke-width="1"/><path d="M1085.5 511.5 H1092 M1088.5 508.0 V515.0" stroke="#e8e8e8" stroke-width="1.1"/>
<rect x="1083.5" y="529.5" width="10" height="10" fill="#141414" stroke="#e8e8e8" stroke-width="1"/><path d="M1085.5 534.5 H1092 M1088.5 531.0 V538.0" stroke="#e8e8e8" stroke-width="1.1"/>
<rect x="1083.5" y="552.5" width="10" height="10" fill="#141414" stroke="#e8e8e8" stroke-width="1"/><path d="M1085.5 557.5 H1092 M1088.5 554.0 V561.0" stroke="#e8e8e8" stroke-width="1.1"/>
<rect x="1083.5" y="575.5" width="10" height="10" fill="#141414" stroke="#e8e8e8" stroke-width="1"/><path d="M1085.5 580.5 H1092 M1088.5 577.0 V584.0" stroke="#e8e8e8" stroke-width="1.1"/>
<rect x="1083.5" y="598.5" width="10" height="10" fill="#141414" stroke="#e8e8e8" stroke-width="1"/><path d="M1085.5 603.5 H1092 M1088.5 600.0 V607.0" stroke="#e8e8e8" stroke-width="1.1"/>
<rect x="1083.5" y="621.5" width="10" height="10" fill="#141414" stroke="#e8e8e8" stroke-width="1"/><path d="M1085.5 626.5 H1092" stroke="#e8e8e8" stroke-width="1.1"/>
<rect x="1083.5" y="690.5" width="10" height="10" fill="#141414" stroke="#e8e8e8" stroke-width="1"/><path d="M1085.5 695.5 H1092" stroke="#e8e8e8" stroke-width="1.1"/>
<rect x="1083.5" y="736.5" width="10" height="10" fill="#141414" stroke="#e8e8e8" stroke-width="1"/><path d="M1085.5 741.5 H1092" stroke="#e8e8e8" stroke-width="1.1"/>

<!-- scrollbar -->
<rect x="1490" y="177" width="22" height="654" fill="#2e2e2e"/>
<path d="M1495 192 H1506 L1500.5 186 Z" fill="#999"/>
<rect x="1495" y="198" width="11" height="490" fill="#4d4d4d"/>
<path d="M1495 817 H1506 L1500.5 823.5 Z" fill="#999"/>
</svg>
<!-- description -->
<div class="a" style="left:1079px;top:831px;width:433px;height:79px;background:#1f1f1f;border-top:1px solid #3a3a3a"></div>
<div class="t" style="left:1087px;top:842px;color:#f0f0f0;font-weight:bold">Assemblies</div>
<div class="t" style="left:1087px;top:865px;color:#e6e6e6"><span class="c">指定報表參考的組件。</span></div>

<!-- right vertical strip -->
<div class="a" style="left:1544px;top:90px;width:8px;height:30px;background:#3d3d3d"></div>
<div class="a" style="left:1544px;top:135px;width:8px;height:54px;background:#3d3d3d"></div>
<div class="a" style="left:1544px;top:204px;width:8px;height:99px;background:#3d3d3d"></div>
<div class="vt" style="left:1537px;top:91px"><span class="c">通知</span></div>
<div class="vt" style="left:1537px;top:135px">Git <span class="c">變更</span></div>
<div class="vt" style="left:1537px;top:205px">Team Explorer</div>

<!-- status bar -->
<div class="a" style="left:0;top:918px;width:1552px;height:28px;background:#424242"></div>
<svg class="a" style="left:0;top:918px" width="1552" height="28" viewBox="0 918 1552 28">
<path d="M5.5 922.5 H24.5 V937.5 H17 L15 940.5 L13 937.5 H5.5 Z" fill="#4a4a4a" stroke="#d8d8d8" stroke-width="1.2"/>
<path d="M1154 939.5 V927 M1149.3 933.2 L1154 927 L1158.7 933.2" fill="none" stroke="#e4e4e4" stroke-width="1.8"/>
<path d="M1299 934.5 H1309 L1304 929.5 Z" fill="#f0f0f0"/>
<path d="M1346 923 L1355 932 L1346 941 L1337 932 Z" fill="#e4e4e4" stroke="#e4e4e4" stroke-width="0.8" stroke-linejoin="round"/>
<path d="M1344.3 924.8 L1350.2 931.8 M1346 928.8 V935.8" fill="none" stroke="#444" stroke-width="1.2"/>
<circle cx="1350.2" cy="932" r="1.5" fill="#444"/><circle cx="1346" cy="935.8" r="1.5" fill="#444"/>
<path d="M1444 934.5 H1455 L1449.5 929.5 Z" fill="#f0f0f0"/>
<path d="M1484 937.5 Q1486 935 1486 930 Q1486 924.5 1491 924.5 Q1496 924.5 1496 930 Q1496 935 1498 937.5 Z" fill="none" stroke="#e8c77a" stroke-width="1.2"/>
<circle cx="1499.5" cy="935.5" r="8" fill="#f08a96"/>
<path d="M1497.5 931.5 L1500 929.8 V941" fill="none" stroke="#1a1a1a" stroke-width="1.3"/>
<g fill="#9a9a9a"><rect x="1546" y="932" width="1" height="1"/><rect x="1546" y="936" width="1" height="1"/><rect x="1546" y="940" width="1" height="1"/><rect x="1542" y="936" width="1" height="1"/><rect x="1542" y="940" width="1" height="1"/><rect x="1538" y="940" width="1" height="1"/></g>
</svg>
<div class="t" style="left:35px;top:926px;color:#f0f0f0"><span class="c">就緒</span></div>
<div class="t" style="left:1171px;top:925px;color:#f0f0f0"><span class="c">新增至原始檔控制</span></div>
<div class="t" style="left:1363px;top:925px;color:#f0f0f0"><span class="c">選取存放庫</span></div>

<!-- window controls -->
<svg class="a" style="left:1380px;top:0" width="172" height="40" viewBox="1380 0 172 40">
<path d="M1401 22.5 H1413" stroke="#e8e8e8" stroke-width="1.2"/>
<rect x="1459.5" y="17.5" width="11" height="11" fill="none" stroke="#e8e8e8" stroke-width="1.2"/>
<path d="M1517 17 L1529 29 M1529 17 L1517 29" stroke="#e8e8e8" stroke-width="1.2"/>
</svg>
</body></html>
